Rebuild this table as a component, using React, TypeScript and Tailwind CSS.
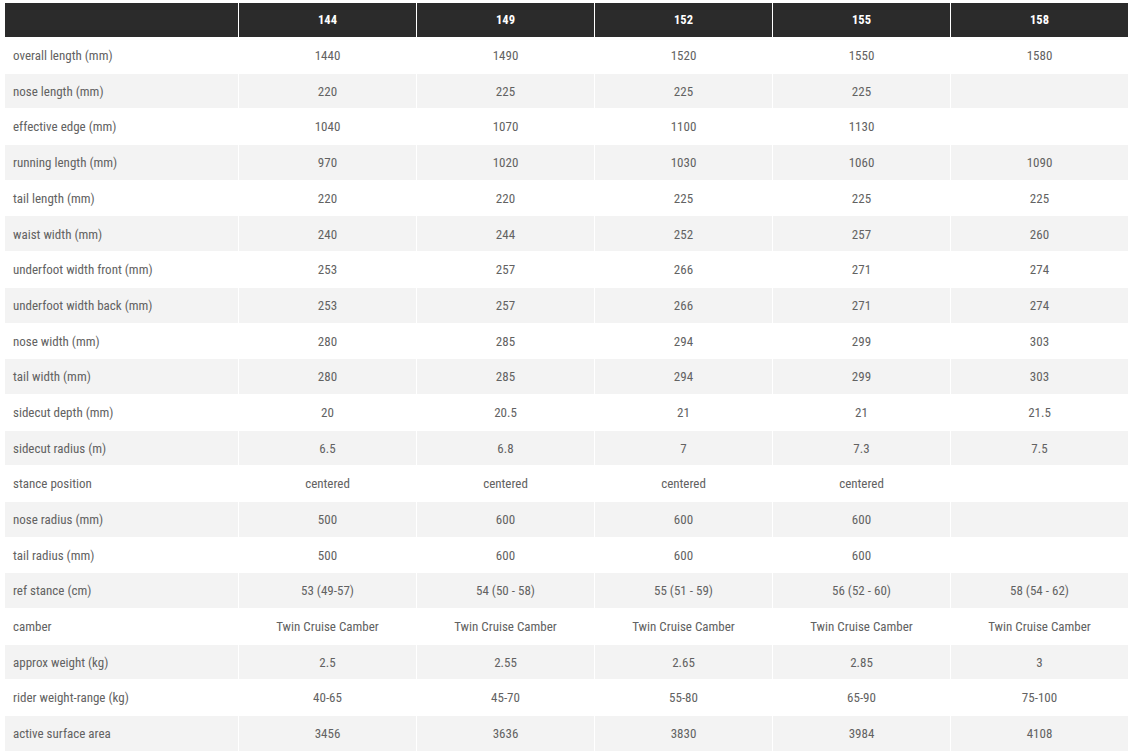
import React from "react";

const sizes = ["144", "149", "152", "155", "158"];

const rows: [string, string[]][] = [
  ["overall length (mm)", ["1440", "1490", "1520", "1550", "1580"]],
  ["nose length (mm)", ["220", "225", "225", "225", ""]],
  ["effective edge (mm)", ["1040", "1070", "1100", "1130", ""]],
  ["running length (mm)", ["970", "1020", "1030", "1060", "1090"]],
  ["tail length (mm)", ["220", "220", "225", "225", "225"]],
  ["waist width (mm)", ["240", "244", "252", "257", "260"]],
  ["underfoot width front (mm)", ["253", "257", "266", "271", "274"]],
  ["underfoot width back (mm)", ["253", "257", "266", "271", "274"]],
  ["nose width (mm)", ["280", "285", "294", "299", "303"]],
  ["tail width (mm)", ["280", "285", "294", "299", "303"]],
  ["sidecut depth (mm)", ["20", "20.5", "21", "21", "21.5"]],
  ["sidecut radius (m)", ["6.5", "6.8", "7", "7.3", "7.5"]],
  ["stance position", ["centered", "centered", "centered", "centered", ""]],
  ["nose radius (mm)", ["500", "600", "600", "600", ""]],
  ["tail radius (mm)", ["500", "600", "600", "600", ""]],
  ["ref stance (cm)", ["53 (49-57)", "54 (50 - 58)", "55 (51 - 59)", "56 (52 - 60)", "58 (54 - 62)"]],
  ["camber", ["Twin Cruise Camber", "Twin Cruise Camber", "Twin Cruise Camber", "Twin Cruise Camber", "Twin Cruise Camber"]],
  ["approx weight (kg)", ["2.5", "2.55", "2.65", "2.85", "3"]],
  ["rider weight-range (kg)", ["40-65", "45-70", "55-80", "65-90", "75-100"]],
  ["active surface area", ["3456", "3636", "3830", "3984", "4108"]],
];

export default function App() {
  return (
    <div
      className="min-h-screen bg-white pt-[3px] pl-[5px]"
      style={{ fontFamily: '"Roboto Condensed", "Liberation Sans Narrow", "DejaVu Sans Condensed", Roboto, sans-serif' }}
    >
      <div className="grid w-[1123px] grid-cols-[233px_repeat(5,1fr)] gap-px">
        {/* header */}
        <div className="h-[34px] bg-[#2b2b2b]" />
        {sizes.map((s) => (
          <div key={s} className="flex h-[34px] items-center justify-center bg-[#2b2b2b] text-[12.5px] font-bold text-white">
            {s}
          </div>
        ))}

        {rows.map(([label, vals], i) => {
          const bg = i % 2 === 1 ? "bg-[#f3f3f3]" : "bg-white";
          return (
            <React.Fragment key={label}>
              <div className={`flex h-[34.7px] items-center pt-px pl-[8px] text-[13px] text-[#626262] ${bg}`}>{label}</div>
              {vals.map((v, j) => (
                <div key={j} className={`flex h-[34.7px] items-center justify-center pt-px text-[13px] text-[#626262] ${bg}`}>
                  {v}
                </div>
              ))}
            </React.Fragment>
          );
        })}
      </div>
    </div>
  );
}
